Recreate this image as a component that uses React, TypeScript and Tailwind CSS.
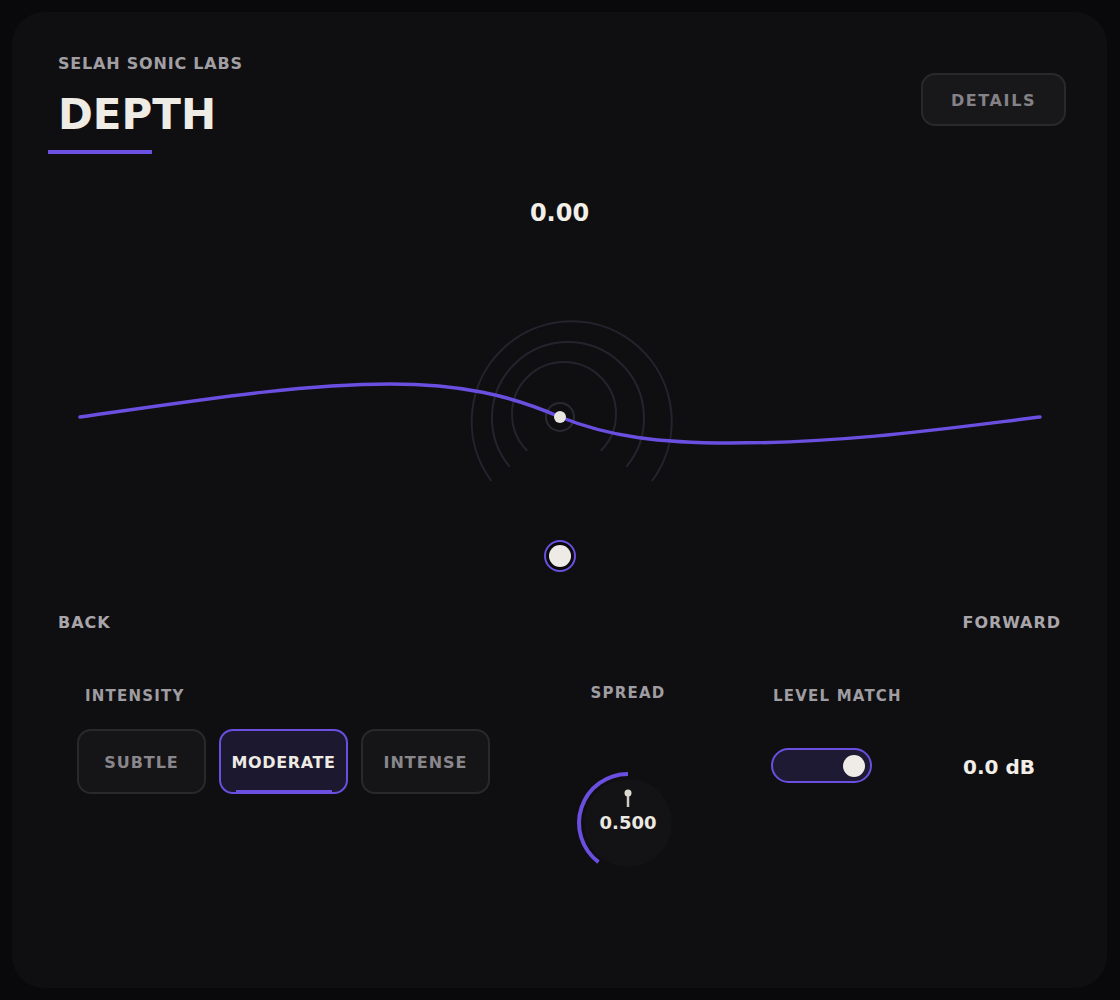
import { useState } from 'react';

const ACCENT = '#6a4fe0';

const MODES = ['SUBTLE', 'MODERATE', 'INTENSE'] as const;
type Mode = (typeof MODES)[number];

// Depth curve + ripple rings, drawn in panel coordinates
function DepthStage() {
  return (
    <svg width={1095} height={190} viewBox="12 300 1095 190" className="block">
      <g fill="none" stroke="#25242e" strokeWidth={2}>
        <path d="M527.2 450.8 A52 52 0 1 1 600.8 450.8" />
        <path d="M509.8 466.9 A76 76 0 1 1 626.2 466.9" />
        <path d="M491.5 481 A100 100 0 1 1 651.9 481" />
        <circle cx={560} cy={417} r={14} stroke="#2a2933" />
      </g>
      <path
        d="M80 417 C200 400, 300 384, 390 384 C460 384, 510 395, 560 417 C610 437, 660 443, 730 443 C850 443, 950 428, 1040 417"
        fill="none"
        stroke={ACCENT}
        strokeWidth={3.5}
        strokeLinecap="round"
      />
      <circle cx={560} cy={417} r={6} fill="#e9e5df" />
    </svg>
  );
}

function SpreadKnob({ value }: { value: number }) {
  return (
    <div className="relative w-[120px] h-[120px]">
      <svg width={120} height={120} viewBox="0 0 120 120" className="block">
        <circle cx={60} cy={60} r={44} fill="#131315" />
        <path d="M30.5 99.1 A49 49 0 0 1 60 11" fill="none" stroke={ACCENT} strokeWidth={4} />
        <line x1={60} y1={30} x2={60} y2={44} stroke="#cfcac4" strokeWidth={2.5} />
        <circle cx={60} cy={30} r={3.5} fill="#dcd8d2" />
      </svg>
      <div className="absolute inset-0 flex items-center justify-center">
        <span className="text-[18px] leading-[20px] font-bold text-[#ece8e2]">{value.toFixed(3)}</span>
      </div>
    </div>
  );
}

export default function App() {
  const [mode, setMode] = useState<Mode>('MODERATE');
  const [levelMatch, setLevelMatch] = useState(true);

  return (
    <div
      className="w-[1120px] h-[1000px] bg-[#09090b] p-3"
      style={{ fontFamily: '"DejaVu Sans", Verdana, sans-serif' }}
    >
      <div className="w-[1095px] h-[976px] rounded-[32px] bg-[#0f0f11] flex flex-col pl-[46px] pr-[41px] pt-[42px]">
        {/* header */}
        <div className="flex items-start justify-between">
          <div className="flex flex-col">
            <p className="text-[16px] leading-[20px] font-bold tracking-[0.05em] text-[#a29fa4]">
              SELAH SONIC LABS
            </p>
            <h1 className="mt-[16px] text-[42px] leading-[50px] font-bold text-[#efebe5]">DEPTH</h1>
            <div className="mt-[10px] -ml-[10px] w-[104px] h-[4px] bg-[#6a4fe0]" />
          </div>
          <button className="mt-[19px] pt-[2px] w-[145px] h-[53px] rounded-[14px] border-2 border-[#29292c] bg-[#18181a] text-[16px] font-bold tracking-[0.1em] text-[#858287]">
            DETAILS
          </button>
        </div>

        {/* depth stage */}
        <div className="-ml-[46px] w-[1095px] flex flex-col items-center">
          <p className="mt-[45px] text-[24px] leading-[28px] font-bold text-[#f2eee8]">0.00</p>
          <div className="mt-[73px]">
            <DepthStage />
          </div>
          <div className="mt-[50px] w-[32px] h-[32px] rounded-full border-2 border-[#6a4fe0] bg-[#0a0a0c] flex items-center justify-center">
            <div className="w-[22px] h-[22px] rounded-full bg-[#eeeae5]" />
          </div>
        </div>

        <div className="mt-[41px] flex justify-between pr-[5px] text-[16px] leading-[20px] font-bold tracking-[0.06em] text-[#a9a6ab]">
          <span>BACK</span>
          <span>FORWARD</span>
        </div>

        {/* controls */}
        <div className="mt-[53px] ml-[19px] flex items-start">
          <div className="w-[413px] flex flex-col">
            <p className="pl-[8px] text-[15px] leading-[20px] font-bold tracking-[0.08em] text-[#a09da2]">INTENSITY</p>
            <div className="mt-[23px] flex gap-[13px]">
              {MODES.map((m) => {
                const active = m === mode;
                return (
                  <button
                    key={m}
                    onClick={() => setMode(m)}
                    className={
                      active
                        ? 'relative pt-[3px] w-[129px] h-[65px] rounded-[14px] border-2 border-[#6a4fe0] bg-[#1b1830] text-[16px] font-bold tracking-[0.04em] text-[#eeeae4]'
                        : 'relative pt-[3px] w-[129px] h-[65px] rounded-[14px] border-2 border-[#29292c] bg-[#151517] text-[16px] font-bold tracking-[0.06em] text-[#8a878c]'
                    }
                  >
                    {m}
                    {active && <span className="absolute left-[15px] bottom-[-2px] w-[96px] h-[4px] bg-[#6a4fe0]" />}
                  </button>
                );
              })}
            </div>
          </div>

          <div className="ml-[78px] w-[120px] -mt-[3px] flex flex-col items-center">
            <p className="text-[15px] leading-[20px] font-bold tracking-[0.08em] text-[#a09da2]">SPREAD</p>
            <div className="mt-[60px]">
              <SpreadKnob value={0.5} />
            </div>
          </div>

          <div className="ml-[83px] w-[140px] flex flex-col">
            <p className="pl-[2px] text-[15px] leading-[20px] font-bold tracking-[0.08em] text-[#a09da2] whitespace-nowrap">
              LEVEL MATCH
            </p>
            <button
              onClick={() => setLevelMatch(!levelMatch)}
              className={
                levelMatch
                  ? 'mt-[42px] w-[101px] h-[35px] rounded-full border-2 border-[#6a4fe0] bg-[#1e1a33] flex items-center justify-end pr-[5px]'
                  : 'mt-[42px] w-[101px] h-[35px] rounded-full border-2 border-[#2a2a2d] bg-[#151517] flex items-center justify-start pl-[5px]'
              }
            >
              <span className="w-[22px] h-[22px] rounded-full bg-[#efebe6]" />
            </button>
          </div>

          <p className="ml-[52px] mt-[69px] text-[20px] leading-[24px] font-bold text-[#f2eee8] whitespace-nowrap">
            0.0 dB
          </p>
        </div>
      </div>
    </div>
  );
}
